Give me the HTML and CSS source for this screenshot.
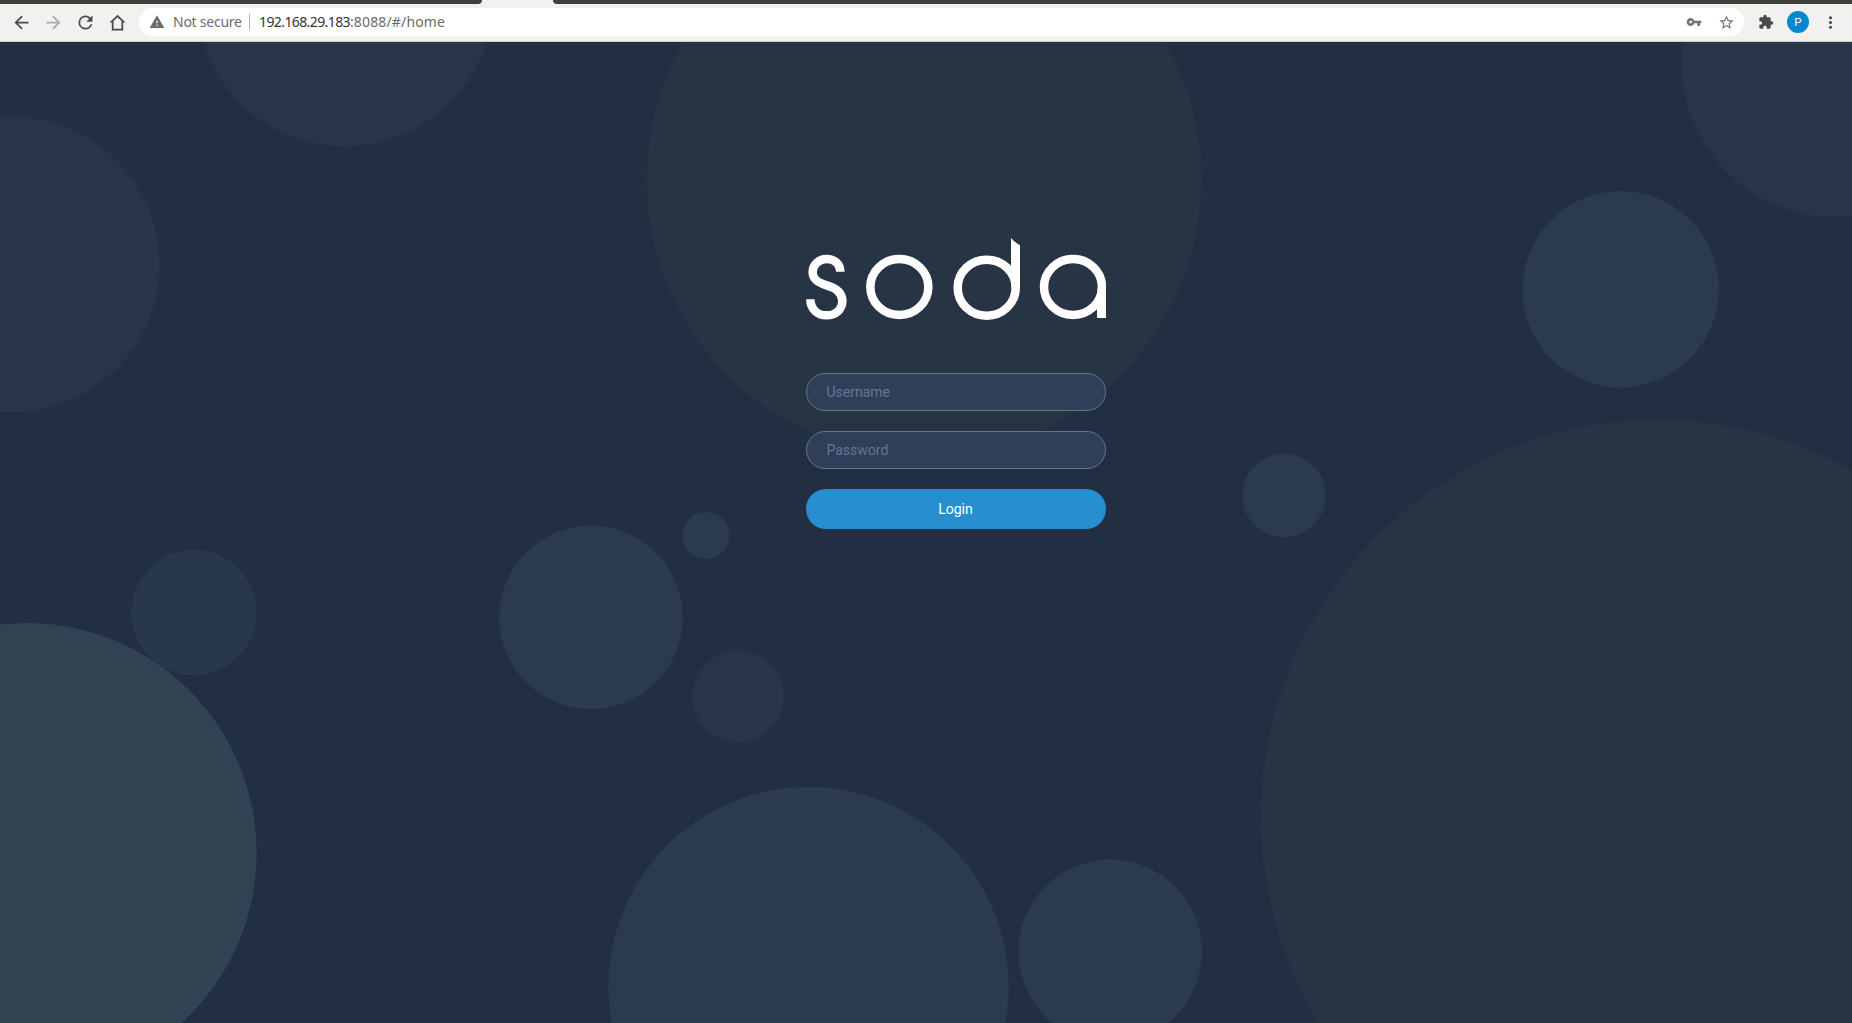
FILE: index.html
```html
<!DOCTYPE html>
<html lang="en">
<head>
<meta charset="utf-8">
<title>SODA</title>
<link rel="stylesheet" href="styles.css">
</head>
<body>
<header class="browser">
  <div class="tabs"><span class="tabs-left"></span><span class="tabs-right"></span></div>
  <div class="toolbar">
    <nav class="nav">
      <svg class="icon" viewBox="0 0 24 24"><path d="M20 11H7.83l5.59-5.59L12 4l-8 8 8 8 1.41-1.41L7.83 13H20z"/></svg>
      <svg class="icon disabled" viewBox="0 0 24 24"><path d="M12 4l-1.41 1.41L16.17 11H4v2h12.17l-5.58 5.59L12 20l8-8z"/></svg>
      <svg class="icon" viewBox="0 0 24 24"><path d="M17.65 6.35A7.96 7.96 0 0 0 12 4a8 8 0 1 0 7.73 10h-2.08A6 6 0 1 1 12 6c1.66 0 3.14.69 4.22 1.78L13 11h7V4z"/></svg>
      <svg class="icon" viewBox="0 0 24 24"><path d="M12 3L2.800 12h2.700v9h13v-9h2.700zm0 2.900l4.500 4.400V19h-9v-8.700z"/></svg>
    </nav>
    <div class="address">
      <svg class="warn" viewBox="0 0 24 24"><path d="M1 21h22L12 2zm12-3h-2v-2h2zm0-4h-2v-4h2z"/></svg>
      <span class="security">Not secure</span>
      <span class="divider"></span>
      <span class="url"><span class="host">192.168.29.183</span><span class="path">:8088/#/home</span></span>
      <svg class="key" viewBox="0 0 24 24"><path d="M12.65 10A6 6 0 1 0 12.650 14H17v4h4v-4h2v-4zM7 14a2 2 0 1 1 0-4 2 2 0 0 1 0 4z"/></svg>
      <svg class="star" viewBox="0 0 24 24"><path d="M22 9.240l-7.190-.62L12 2 9.190 8.630 2 9.240l5.460 4.730L5.820 21 12 17.270 18.180 21l-1.630-7.030zM12 15.400l-3.760 2.270 1-4.280-3.320-2.880 4.380-.38L12 6.100l1.710 4.040 4.380.38-3.320 2.880 1 4.280z"/></svg>
    </div>
    <svg class="puzzle" viewBox="0 0 24 24"><path d="M20.500 11H19V7c0-1.100-.9-2-2-2h-4V3.500a2.500 2.500 0 0 0-5 0V5H4c-1.100 0-1.990.9-1.990 2v3.800H3.500a2.700 2.700 0 0 1 0 5.400H2V20c0 1.100.9 2 2 2h3.800v-1.500a2.700 2.700 0 0 1 5.400 0V22H17c1.100 0 2-.9 2-2v-4h1.500a2.500 2.500 0 0 0 0-5z"/></svg>
    <span class="avatar">P</span>
    <svg class="menu" viewBox="0 0 24 24"><path d="M12 8a2 2 0 1 0 0-4 2 2 0 0 0 0 4zm0 2a2 2 0 1 0 0 4 2 2 0 0 0 0-4zm0 6a2 2 0 1 0 0 4 2 2 0 0 0 0-4z"/></svg>
  </div>
</header>
<main class="page">
  <svg class="bubbles" viewBox="0 42 1852 981">
    <g class="slate">
      <circle cx="345" cy="-2" r="148.500"/>
      <circle cx="12" cy="264.500" r="147.800"/>
      <circle cx="1836" cy="62.500" r="154.800"/>
      <circle cx="738.100" cy="696.400" r="45.900"/>
    </g>
    <g class="moss">
      <circle cx="924.100" cy="179.500" r="277.600"/>
      <circle cx="1658" cy="816.700" r="397.200"/>
    </g>
    <g class="steel">
      <circle cx="1620.600" cy="289.200" r="98.200"/>
      <circle cx="1284" cy="495.600" r="41.800"/>
      <circle cx="591" cy="617.400" r="91.800"/>
      <circle cx="706" cy="535.600" r="23.700"/>
      <circle cx="808.500" cy="987" r="200.200"/>
      <circle cx="1110.200" cy="951.500" r="91.900"/>
    </g>
    <circle class="dusk" cx="194.100" cy="612.500" r="62.700"/>
    <circle class="teal" cx="26.700" cy="853" r="230"/>
  </svg>
  <form class="login">
    <svg class="logo" viewBox="48 39 900 246" role="img" aria-label="soda">
      <path class="stroke" d="M151 140C151 118 135 102 110 102C85 102 68 120 68 142C68 163 83 173 110 181C142 190 157 204 157 228C157 253 137 271 110 271C82 271 61 252 61 223"/>
      <ellipse class="stroke" cx="328" cy="186" rx="87" ry="84"/>
      <ellipse class="stroke" cx="590" cy="188" rx="87" ry="84"/>
      <path d="M663 39Q674 53 690 60V190H665L663 165z"/>
      <ellipse class="stroke" cx="849" cy="186" rx="87" ry="84"/>
      <path d="M924 180H948V279H921V220z"/>
    </svg>
    <input class="field" type="text" placeholder="Username">
    <input class="field" type="password" placeholder="Password">
    <button class="submit" type="button">Login</button>
  </form>
</main>
</body>
</html>
```
FILE: styles.css
```css
* { box-sizing: border-box; }
body {
  margin: 0;
  height: 1023px;
  display: flex;
  flex-direction: column;
  overflow: hidden;
  font-family: Roboto, sans-serif;
}
svg { display: block; flex: none; }

.browser { height: 42px; flex: none; background: #f2f1ef; border-bottom: 1px solid #cbcdcf; }
.tabs { display: flex; justify-content: space-between; height: 4px; }
.tabs-left { width: 482px; background: #403e3a; border-bottom-right-radius: 5px; }
.tabs-right { width: 1299px; background: #403e3a; border-bottom-left-radius: 5px; }
.toolbar { display: flex; align-items: center; height: 36px; padding-left: 10.500px; }
.nav { display: flex; gap: 11px; width: 128.500px; }
.icon { width: 21px; height: 21px; fill: #4b4a48; }
.disabled { fill: #aaa9a7; }
.address {
  display: flex;
  align-items: center;
  width: 1605px;
  height: 28px;
  padding-left: 10px;
  border-radius: 14px;
  background: #fff;
  font: 14px/28px "Noto Sans", sans-serif;
  color: #6b6b6b;
}
.warn { width: 16px; height: 16px; fill: #6b6b6b; margin-right: 8px; }
.security { width: 76px; letter-spacing: -0.25px; white-space: nowrap; }
.divider { width: 1px; height: 16px; background: #b3b3b3; margin-right: 9px; }
.url { flex: 1; letter-spacing: -0.6px; }
.host { color: #333; }
.path { letter-spacing: 0.15px; }
.key { width: 16px; height: 16px; fill: #737373; margin-right: 16px; }
.star { width: 17px; height: 17px; fill: #737373; margin-right: 9px; }
.puzzle { width: 16px; height: 16px; fill: #4b4a48; margin-left: 14px; }
.avatar {
  width: 22px;
  height: 22px;
  margin: 0 12px 0 13px;
  border-radius: 50%;
  background: #0288d1;
  color: #fff;
  font-size: 11.500px;
  line-height: 22px;
  text-align: center;
}
.menu { width: 19px; height: 19px; fill: #4b4a48; }

.page { position: relative; flex: 1; padding: 196px 0 0 60px; background: #222e41; }
.bubbles { position: absolute; inset: 0; width: 1852px; height: 981px; }
.slate { fill: #283447; }
.moss { fill: #273444; }
.steel { fill: #2b3a4c; }
.dusk { fill: #283749; }
.teal { fill: #314253; }

.login { position: relative; width: 300px; margin: 0 auto; display: flex; flex-direction: column; gap: 20px; }
.logo { width: 300px; height: 82px; margin-bottom: 33px; fill: #fff; }
.stroke { fill: none; stroke: #fff; stroke-width: 25.500; }
.field, .submit { width: 300px; border-radius: 20px; font: 14px Roboto, sans-serif; }
.field {
  height: 38px;
  padding: 0 19.500px;
  border: 1px solid #677482;
  background: #2e3f57;
  color: #fff;
  outline: 0;
}
.field::placeholder { color: #617799; opacity: 1; }
.submit { height: 40px; padding: 0 1px 0 0; border: 0; background: #278ed0; color: #fff; }
```
